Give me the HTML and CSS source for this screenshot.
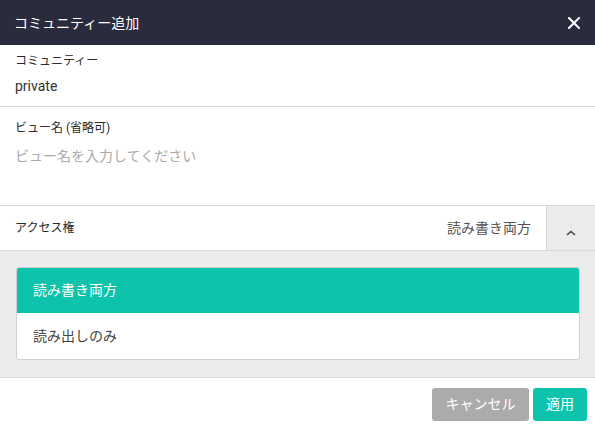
FILE: index.html
```html
<!DOCTYPE html>
<html lang="ja">
<head>
<meta charset="utf-8">
<link rel="stylesheet" href="styles.css">
</head>
<body>
<div class="dialog">
  <header class="head">
    <span class="title">コミュニティー追加</span>
    <svg class="close" width="12" height="12" viewBox="0 0 12 12"><path d="M1 1L11 11M11 1L1 11" stroke="#fff" stroke-width="2" stroke-linecap="square"/></svg>
  </header>
  <section class="field community">
    <div class="label">コミュニティー</div>
    <div class="value">private</div>
  </section>
  <section class="field view">
    <div class="label">ビュー名 (省略可)</div>
    <div class="placeholder">ビュー名を入力してください</div>
  </section>
  <div class="access">
    <span class="label">アクセス権</span>
    <span class="access-value">読み書き両方</span>
    <span class="toggle"><svg width="10" height="6" viewBox="0 0 10 6"><path d="M1 5L5 1.5L9 5" stroke="#444" stroke-width="1.6" fill="none"/></svg></span>
  </div>
  <div class="options">
    <div class="card">
      <div class="opt selected">読み書き両方</div>
      <div class="opt">読み出しのみ</div>
    </div>
  </div>
  <footer class="foot">
    <button class="btn cancel">キャンセル</button>
    <button class="btn apply">適用</button>
  </footer>
</div>
</body>
</html>
```
FILE: styles.css
```css
* { box-sizing: border-box; }
html, body { margin: 0; padding: 0; background: #fff; }
body { font-family: Roboto, "Noto Sans CJK JP", sans-serif; color: #333; }
.dialog { width: 595px; height: 430px; display: flex; flex-direction: column; }
.head { height: 45px; background: #2a2b3d; display: flex; align-items: center; justify-content: space-between; padding: 0 15px 0 14px; }
.title { color: #fff; font-size: 14px; line-height: 20px; }
.close { display: block; }
.field { border-bottom: 1px solid #d8d8d8; padding: 0 15px; }
.label { font-size: 12px; line-height: 16px; color: #2a2a2a; }
.community { height: 62px; padding-top: 8px; }
.community .value { font-size: 14px; line-height: 20px; color: #333; margin-top: 7px; }
.view { height: 99px; padding-top: 13px; }
.view .placeholder { font-size: 14px; line-height: 20px; color: #aaa; margin-top: 10px; }
.access { height: 45px; display: flex; align-items: center; border-bottom: 1px solid #d8d8d8; padding-left: 15px; }
.access .label { flex: 1; padding-bottom: 1px; }
.access-value { font-size: 14px; line-height: 20px; color: #555; margin-right: 15px; padding-bottom: 1px; }
.toggle { width: 49px; height: 44px; background: #ebebeb; border-left: 1px solid #d8d8d8; display: flex; align-items: center; justify-content: center; padding-top: 9px; }
.toggle svg { display: block; }
.options { background: #ebebeb; padding: 16px 15px 17px 16px; border-bottom: 1px solid #d8d8d8; }
.card { background: #fff; border: 1px solid #d0d0d0; border-radius: 3px; overflow: hidden; }
.opt { height: 46px; display: flex; align-items: center; padding-left: 16px; font-size: 14px; line-height: 20px; color: #444; }
.opt.selected { background: #0dc3ab; color: #fff; height: 45px; padding-bottom: 2px; }
.foot { display: flex; justify-content: flex-end; gap: 4px; padding: 10px 8px 0 0; }
.btn { font-family: inherit; border: none; border-radius: 3px; height: 33px; color: #fff; font-size: 14px; line-height: 20px; padding: 0 0 1px; }
.cancel { background: #ababab; width: 97px; }
.apply { background: #0dc3ab; width: 54px; }
```
